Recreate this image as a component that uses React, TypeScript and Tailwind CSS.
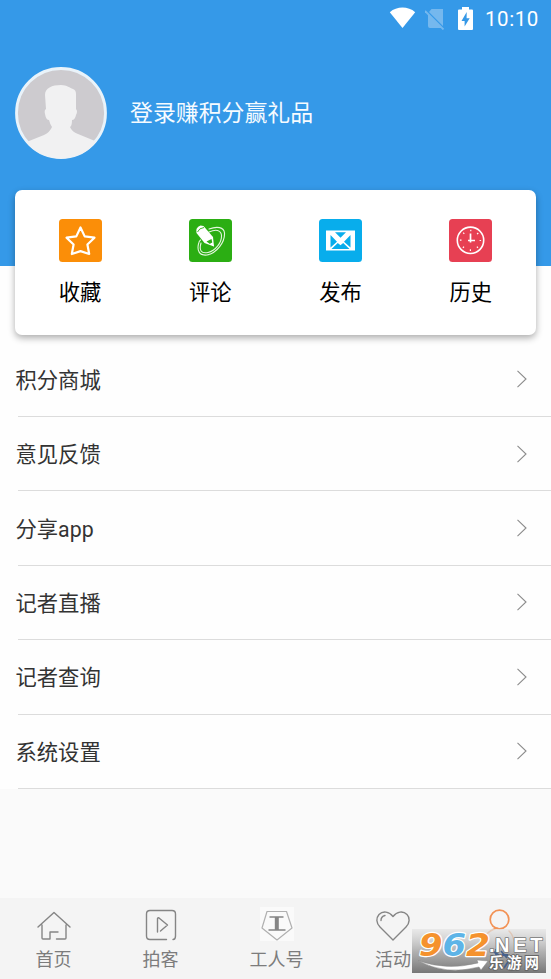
import React from 'react';

const rows = ['积分商城', '意见反馈', '分享app', '记者直播', '记者查询', '系统设置'];

function StatusBar() {
  return (
    <div className="flex h-[38px] items-center justify-end pr-3 text-white">
      <svg className="mr-[9px] mb-[3px] h-[21px] w-[27px]" viewBox="0 0 27 22" fill="currentColor">
        <path d="M0.2 5.5C7.5-1 19.5-1 26.8 5.5L13.5 22Z" />
      </svg>
      <svg className="mr-[13px] h-[21px] w-[20px]" viewBox="0 0 20 21" fill="#75b8ee">
        <path d="M6.5 0H18V17L4 3ZM3 5L17 19H5Q3 19 3 17Z" />
        <path d="M0 2L18.5 20.5" stroke="#75b8ee" strokeWidth="1.8" />
      </svg>
      <svg className="mr-[12px] mb-[2px] h-[23px] w-[15px]" viewBox="0 0 15 23" fill="currentColor">
        <path d="M4 0H11V2.5H14Q15 2.5 15 3.5V22Q15 23 14 23H1Q0 23 0 22V3.5Q0 2.5 1 2.5H4Z" />
        <path d="M8.7 5L3.5 14H6.6V19.5L11.7 11.2H8.6Z" fill="#3598e7" />
      </svg>
      <span className="text-[20.5px] leading-none tracking-[0.6px] [font-family:Roboto,sans-serif]">10:10</span>
    </div>
  );
}

function Avatar() {
  return (
    <svg className="h-[92px] w-[92px]" viewBox="0 0 92 92">
      <defs>
        <clipPath id="face"><circle cx="46" cy="46" r="45.5" /></clipPath>
      </defs>
      <circle cx="46" cy="46" r="44.5" fill="#cdcbcf" stroke="#e9f3fa" strokeWidth="2.8" />
      <path clipPath="url(#face)" fill="#f1f1f2" d="M30 28C30 21 37 18 46 18C52 18 55 21 58 22Q61 23 61 27V42Q63 44 61 48Q60 53 57 53Q57 59 55 60Q57 65 63 67L80 74L92 80V92H0V80L14 74L29 68Q35 65 37 60Q35 57 34 53Q31 53 30 47Q29 43 31 42Z" />
    </svg>
  );
}

function StarIcon() {
  return (
    <svg className="h-[43px] w-[43px]" viewBox="0 0 43 43">
      <rect width="43" height="43" rx="3.5" fill="#fb8e08" />
      <path d="M21.5 8.5L25.7 17.4L35.5 18.7L28.4 25.5L30.2 35L21.5 32.1L12.8 35L14.6 25.5L7.5 18.7L17.3 17.4Z" fill="none" stroke="#fff" strokeWidth="2.2" strokeLinejoin="round" />
    </svg>
  );
}

function PencilIcon() {
  return (
    <svg className="h-[43px] w-[43px]" viewBox="0 0 43 43">
      <rect width="43" height="43" rx="3.5" fill="#2bae13" />
      <g fill="none" stroke="#e5f7df" strokeWidth="1.1" strokeLinecap="round">
        <path d="M20 10C28 7 35 8 35.5 14C36 23 28 34 18 36C10 37 8 31 9.5 25Q10 22 11.5 21" />
        <path d="M20 13C27 10 31.5 11 32.5 16C33 24 26 32 19 33.5C12 35 10 31 12 24" />
      </g>
      <path d="M7.5 14Q6 8.5 11.5 6.5L14.5 7L24 18L25 27.5L15.5 24Z" fill="#fff" />
      <path d="M8.5 13Q10 9 15 8.5" stroke="#2bae13" fill="none" strokeWidth="0.9" />
      <path d="M17.5 22.5L22.5 20L23.3 23.5L21 25Z" fill="#2bae13" />
      <path d="M21 25L23.4 23.4L25 27.5Z" fill="#fff" />
    </svg>
  );
}

function MailIcon() {
  return (
    <svg className="h-[43px] w-[43px]" viewBox="0 0 43 43">
      <rect width="43" height="43" rx="3.5" fill="#08adec" />
      <rect x="7" y="11.5" width="29" height="20" fill="#fff" />
      <g fill="#08adec">
        <path d="M16 13.2H27L21.5 18.8Z" />
        <path d="M11.5 16L18 22.8L11.5 28.5ZM31.5 16L25 22.8L31.5 28.5Z" />
        <path d="M12.5 30L18.8 24L21.5 26.3L24.2 24L30.5 30Z" />
      </g>
    </svg>
  );
}

function ClockIcon() {
  return (
    <svg className="h-[43px] w-[43px]" viewBox="0 0 43 43">
      <rect width="43" height="43" rx="3.5" fill="#e74053" />
      <circle cx="21.5" cy="21.3" r="13.2" fill="none" stroke="#fff" strokeWidth="1.6" />
      <circle cx="21.5" cy="21.3" r="9.8" fill="none" stroke="#fff" strokeWidth="1.6" strokeDasharray="1.2 6.497" strokeDashoffset="0.6" />
      <path d="M21.5 14.5V23.5M19 21.5H26" stroke="#fff" strokeWidth="1.7" />
    </svg>
  );
}

const actions = [
  { label: '收藏', icon: <StarIcon /> },
  { label: '评论', icon: <PencilIcon /> },
  { label: '发布', icon: <MailIcon /> },
  { label: '历史', icon: <ClockIcon /> },
];

function NavItem({ label, className, children }: { label: string; className: string; children: React.ReactNode }) {
  return (
    <div className={`flex shrink-0 flex-col items-center pt-[9px] ${className}`}>
      <svg className="h-[36px] w-[36px]" viewBox="0 0 36 36" fill="none" stroke="#858585" strokeWidth="1.4" strokeLinecap="round" strokeLinejoin="round">
        {children}
      </svg>
      <span className="mt-[4px] text-[18px] leading-[26px] whitespace-nowrap text-[#7c7c7c]">{label}</span>
    </div>
  );
}

function Watermark() {
  return (
    <svg className="absolute top-[31px] left-[412px] h-[44px] w-[134px] overflow-visible" viewBox="0 0 134 44">
      <defs>
        <linearGradient id="plate" x1="0" y1="0" x2="0" y2="1">
          <stop offset="0" stopColor="#e4e4e4" stopOpacity="0.7" />
          <stop offset="0.5" stopColor="#b0b0b0" stopOpacity="0.96" />
          <stop offset="1" stopColor="#777777" />
        </linearGradient>
      </defs>
      <rect width="134" height="44" fill="url(#plate)" />
      <path d="M6 31.5Q34 42 66 34L65 31L76 32L69 41L67 38Q34 47 6 31.5Z" fill="#fff" stroke="#888" strokeWidth="0.5" />
      <path d="M81 22.5L87 26M84 20V28M89 22L95 29M90 26H96M92 39L96 33" stroke="#46618e" strokeWidth="1.8" />
      <g fontWeight="700" stroke="#fff" strokeWidth="2.4" strokeLinejoin="round" paintOrder="stroke">
        <g fontFamily="DejaVu Sans, sans-serif" fontSize="32" fontStyle="italic">
          <text x="7" y="27" fill="#f5922d" textLength="23.5" lengthAdjust="spacingAndGlyphs">9</text>
          <text x="30.5" y="27" fill="#5db4e7" textLength="23.5" lengthAdjust="spacingAndGlyphs">6</text>
          <text x="54" y="27" fill="#f5922d" textLength="24" lengthAdjust="spacingAndGlyphs">2</text>
        </g>
        <g fontFamily="Liberation Sans, sans-serif" stroke="#777" strokeWidth="1.6" fill="#fff" fontSize="20">
          <text x="77" y="22.5">.</text>
          <text x="83" y="22.5" textLength="49.5" letterSpacing="2">NET</text>
        </g>
      </g>
      <g fontFamily="Noto Sans CJK SC, sans-serif" fontWeight="700" fontSize="14.5" fill="#fff" stroke="#666" strokeWidth="1.8" paintOrder="stroke">
        <text x="77" y="38.5">乐</text>
        <text x="95" y="38.5">游</text>
        <text x="112.5" y="38.5">网</text>
      </g>
    </svg>
  );
}

export default function App() {
  return (
    <div className="flex h-[979px] w-[551px] flex-col overflow-hidden bg-[#fafafa] [font-family:Roboto,'Noto_Sans_CJK_SC',sans-serif]">
      <header className="h-[266px] shrink-0 bg-[#3599e8]">
        <StatusBar />
        <div className="mt-[29px] flex items-center pl-[15px]">
          <Avatar />
          <span className="mt-[2px] ml-[23px] text-[22.9px] leading-8 text-[#f6fbff]">登录赚积分赢礼品</span>
        </div>
      </header>

      <div className="h-[523px] shrink-0 bg-[#fefefe]">
        <section className="relative mx-[15px] -mt-[76px] grid h-[145px] w-[521px] grid-cols-4 rounded-[7px] bg-white pt-[29px] shadow-[0_3px_7px_rgba(0,0,0,0.32)]">
          {actions.map((a) => (
            <div key={a.label} className="flex flex-col items-center">
              {a.icon}
              <span className="mt-[15px] text-[21.3px] leading-8 text-black">{a.label}</span>
            </div>
          ))}
        </section>

        <main className="pt-[7.6px]">
          {rows.map((r) => (
            <div key={r} className="flex h-[74.4px] flex-col">
              <div className="flex flex-1 items-center justify-between pr-[23px] pl-[15.5px]">
                <span className="mt-[3px] text-[21.3px] leading-8 text-[#333]">{r}</span>
                <svg className="h-[18px] w-[12px]" viewBox="0 0 12 18" fill="none" stroke="#8b8b8b" strokeWidth="1.1">
                  <path d="M1.5 0.8L10 9L1.5 17.2" />
                </svg>
              </div>
              <div className="ml-[18px] h-px bg-[#dcdcdc]" />
            </div>
          ))}
        </main>
      </div>

      <nav className="relative mt-auto flex h-[81px] shrink-0 bg-[#f4f4f4]">
        <NavItem label="首页" className="w-[107px]">
          <path d="M2 20L18 5.5L34 20M6 18V31Q6 32 7 32H14V25H22M20.5 32H29Q30 32 30 31V18" />
        </NavItem>
        <NavItem label="拍客" className="w-[107px]">
          <path d="M23.5 32.5H7Q3.5 32.5 3.5 29V7Q3.5 3.5 7 3.5H29Q32.5 3.5 32.5 7V29Q32.5 32.5 30 32.5M14.5 25V11.5Q15 10.5 16 11L24.5 18L17.5 24" />
        </NavItem>
        <NavItem label="工人号" className="w-[125px]">
          <rect x="1" y="0" width="34" height="34" fill="#fafafa" stroke="none" />
          <path d="M8 4.5H27.5L33 21L18 33L3 21Z" stroke="#b0b0b0" strokeWidth="1.2" />
          <path d="M10.5 10H24.5M9.5 23H26.5" stroke="#858585" strokeWidth="1.7" strokeLinecap="butt" />
          <path d="M17.8 10V23" stroke="#858585" strokeWidth="4" strokeLinecap="butt" />
        </NavItem>
        <NavItem label="活动" className="w-[108px]">
          <path d="M18 33L5 20C1 16 1 11 4 7.5C8 3.5 14 4.5 18 9.5C22 4.5 28 3.5 32 7.5C35 10.5 35 16 31 20Z" />
          <path d="M6 13.5Q6 9.5 10 8.5" />
        </NavItem>
        <NavItem label="我的" className="w-[104px]">
          <circle cx="18.5" cy="12.5" r="9.3" stroke="#f29255" strokeWidth="1.7" />
          <path d="M16 21Q9 23 5 28M28 24Q32 28 33 34" stroke="#f29255" strokeWidth="1.5" />
        </NavItem>
        <Watermark />
      </nav>
    </div>
  );
}
